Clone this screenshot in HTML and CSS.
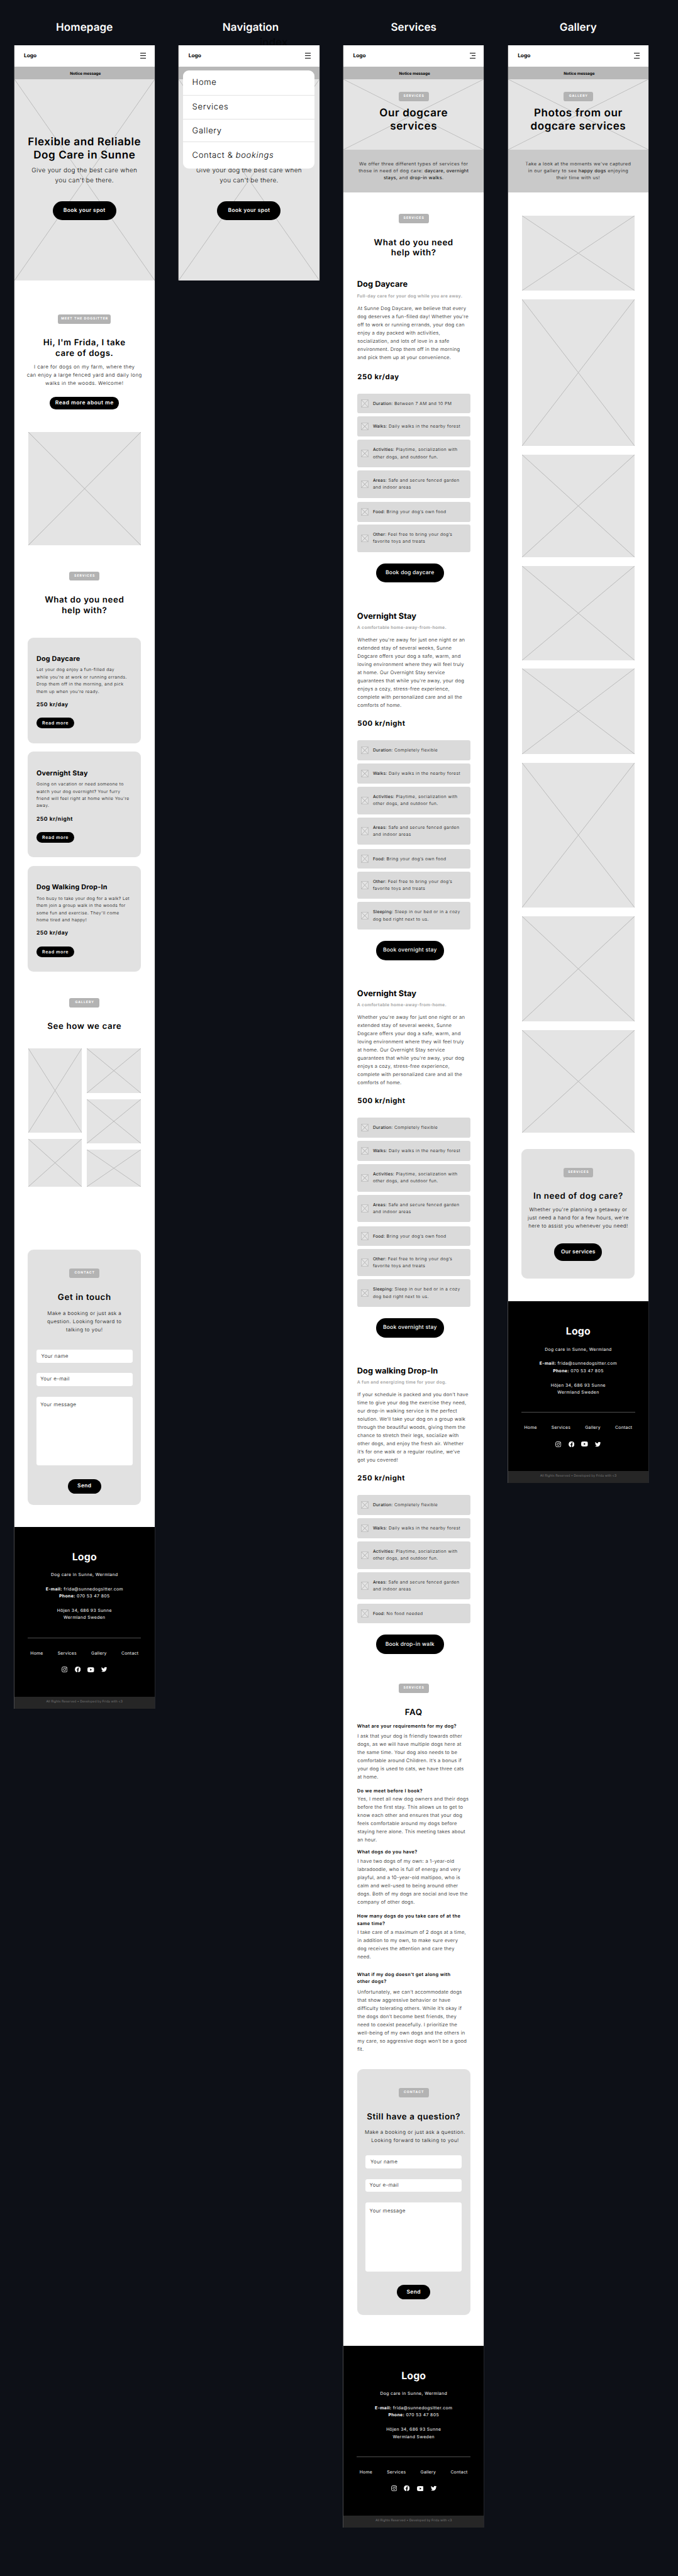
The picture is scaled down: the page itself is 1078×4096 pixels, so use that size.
FILE: index.html
```html
<!DOCTYPE html>
<html lang="en">
<head>
<meta charset="utf-8">
<title>Dog care wireframes</title>
<link rel="stylesheet" href="styles.css">
</head>
<body>
<svg class="defs" aria-hidden="true">
  <symbol id="i-menu" viewBox="0 0 16 16"><path d="M0 1h16M0 8h16M0 15h16" stroke="#000" stroke-width="1.8" shape-rendering="crispEdges"/></symbol>
  <symbol id="i-menu-short" viewBox="0 0 16 16"><path d="M0 1h16M5 8h11M0 15h16" stroke="#000" stroke-width="1.8" shape-rendering="crispEdges"/></symbol>
  <symbol id="i-ig" viewBox="0 0 16 16"><rect x=".8" y=".8" width="14.4" height="14.4" rx="4" fill="none" stroke="#fff" stroke-width="1.6"/><circle cx="8" cy="8" r="3.3" fill="none" stroke="#fff" stroke-width="1.5"/><circle cx="12.2" cy="3.8" r="1" fill="#fff"/></symbol>
  <symbol id="i-fb" viewBox="0 0 16 16"><path fill="#fff" d="M16 8a8 8 0 1 0-9.25 7.9v-5.6H4.7V8h2.05V6.25c0-2 1.2-3.15 3.05-3.15.88 0 1.8.16 1.8.16v2h-1c-1 0-1.32.62-1.32 1.26V8h2.25l-.36 2.3H9.28v5.6A8 8 0 0 0 16 8z"/></symbol>
  <symbol id="i-yt" viewBox="0 0 19 14"><path fill="#fff" fill-rule="evenodd" d="M3 .4Q9.500-.3 16 .4Q18.500.7 18.700 3Q19.200 7 18.700 11Q18.500 13.300 16 13.600Q9.500 14.300 3 13.600Q.5 13.300.3 11Q-.2 7 .3 3Q.5.7 3 .4zM7.600 4v6l5-3z"/></symbol>
  <symbol id="i-tw" viewBox="0 0 16 14"><path fill="#fff" d="M5 13.500c6 0 9.300-5 9.300-9.300v-.4A6.700 6.700 0 0 0 16 2.100a6.600 6.600 0 0 1-1.900.5A3.300 3.300 0 0 0 15.600.8a6.600 6.600 0 0 1-2.100.8 3.300 3.300 0 0 0-5.600 3A9.300 9.300 0 0 1 1.100 1.100a3.300 3.300 0 0 0 1 4.400 3.300 3.300 0 0 1-1.500-.4 3.300 3.300 0 0 0 2.600 3.200 3.300 3.300 0 0 1-1.500.1 3.300 3.300 0 0 0 3.100 2.300A6.600 6.600 0 0 1 0 12a9.300 9.300 0 0 0 5 1.500"/></symbol>
</svg>
<main class="board">

<section class="screen">
  <h2 class="label">Homepage</h2>
  <div class="phone">
    <header class="top"><span class="logo">Logo</span><svg class="menu-icon"><use href="#i-menu"/></svg></header>
    <div class="notice">Notice message</div>
    <div class="hero crossed">
      <h1>Flexible and Reliable<br>Dog Care in Sunne</h1>
      <p class="lead">Give your dog the best care when<br>you can't be there.</p>
      <a class="btn btn-spot">Book your spot</a>
    </div>
    <div class="body">
      <span class="badge badge-wide gap-meet">MEET THE DOGSITTER</span>
      <h3 class="heading">Hi, I'm Frida, I take<br>care of dogs.</h3>
      <p class="text intro">I care for dogs on my farm, where they<br>can enjoy a large fenced yard and daily long<br>walks in the woods. Welcome!</p>
      <a class="btn btn-about">Read more about me</a>
      <div class="photo crossed portrait"></div>
      <span class="badge gap-74">SERVICES</span>
      <h3 class="heading">What do you need<br>help with?</h3>
      <div class="cards">
        <article class="card"><h4>Dog Daycare</h4><p>Let your dog enjoy a fun-filled day<br>while you're at work or running errands.<br>Drop them off in the morning, and pick<br>them up when you're ready.</p><b class="price">250 kr/day</b><a class="btn btn-more">Read more</a></article>
        <article class="card"><h4>Overnight Stay</h4><p>Going on vacation or need someone to<br>watch your dog overnight? Your furry<br>friend will feel right at home while You're<br>away.</p><b class="price">250 kr/night</b><a class="btn btn-more">Read more</a></article>
        <article class="card"><h4>Dog Walking Drop-In</h4><p>Too busy to take your dog for a walk? Let<br>them join a group walk in the woods for<br>some fun and exercise. They'll come<br>home tired and happy!</p><b class="price">250 kr/day</b><a class="btn btn-more">Read more</a></article>
      </div>
      <span class="badge gap-74">GALLERY</span>
      <h3 class="heading">See how we care</h3>
      <div class="mosaic">
        <div class="mosaic-col"><div class="crossed m1"></div><div class="crossed m2"></div></div>
        <div class="mosaic-col"><div class="crossed m3"></div><div class="crossed m3"></div><div class="crossed m4"></div></div>
      </div>
      <form class="panel contact">
        <span class="badge">CONTACT</span>
        <h3 class="heading">Get in touch</h3>
        <p class="text">Make a booking or just ask a<br>question. Looking forward to<br>talking to you!</p>
        <div class="fields"><div class="field field-name">Your name</div><div class="field">Your e-mail</div><div class="field field-area">Your message</div></div>
        <a class="btn btn-send">Send</a>
      </form>
    </div>
    <footer class="footer">
      <div class="foot-logo">Logo</div>
      <p>Dog care in Sunne, Wermland</p>
      <p><b>E-mail:</b> frida@sunnedogsitter.com<br><b>Phone:</b> 070 53 47 805</p>
      <p>Höjen 34, 686 93 Sunne<br>Wermland Sweden</p>
      <hr>
      <nav class="foot-nav"><a>Home</a><a>Services</a><a>Gallery</a><a>Contact</a></nav>
      <div class="social"><svg><use href="#i-ig"/></svg><svg><use href="#i-fb"/></svg><svg class="yt"><use href="#i-yt"/></svg><svg><use href="#i-tw"/></svg></div>
    </footer>
    <div class="rights">All Rights Reserved • Developed by Frida with &lt;3</div>
  </div>
</section>

<section class="screen">
  <h2 class="label label-nav">Navigation</h2>
  <span class="ghost">index</span>
  <div class="phone">
    <header class="top"><span class="logo">Logo</span><svg class="menu-icon"><use href="#i-menu"/></svg></header>
    <div class="notice notice-empty"></div>
    <div class="hero hero-covered crossed">
      <p class="lead">Give your dog the best care when<br>you can't be there.</p>
      <a class="btn btn-spot">Book your spot</a>
    </div>
    <nav class="menu"><a>Home</a><a>Services</a><a>Gallery</a><a>Contact &amp; <i>bookings</i></a></nav>
  </div>
</section>

<section class="screen">
  <h2 class="label">Services</h2>
  <div class="phone">
    <header class="top"><span class="logo">Logo</span><svg class="menu-icon"><use href="#i-menu-short"/></svg></header>
    <div class="notice">Notice message</div>
    <div class="banner crossed"><span class="badge">SERVICES</span><h1>Our dogcare<br>services</h1></div>
    <p class="band">We offer three different types of services for<br>those in need of dog care: <b>daycare, overnight</b><br><b>stays,</b> and <b>drop-in walks</b>.</p>
    <div class="body">
      <span class="badge gap-61">SERVICES</span>
      <h3 class="heading">What do you need<br>help with?</h3>

      <article class="service first">
        <h4>Dog Daycare</h4>
        <p class="sub">Full-day care for your dog while you are away.</p>
        <p class="prose">At Sunne Dog Daycare, we believe that every<br>dog deserves a fun-filled day! Whether you're<br>off to work or running errands, your dog can<br>enjoy a day packed with activities,<br>socialization, and lots of love in a safe<br>environment. Drop them off in the morning<br>and pick them up at your convenience.</p>
        <b class="rate">250 kr/day</b>
        <ul class="facts">
          <li><i class="crossed"></i><p><b>Duration:</b> Between 7 AM and 10 PM</p></li>
          <li><i class="crossed"></i><p><b>Walks:</b> Daily walks in the nearby forest</p></li>
          <li class="two"><i class="crossed"></i><p><b>Activities:</b> Playtime, socialization with<br>other dogs, and outdoor fun.</p></li>
          <li class="two"><i class="crossed"></i><p><b>Areas:</b> Safe and secure fenced garden<br>and indoor areas</p></li>
          <li class="food"><i class="crossed"></i><p><b>Food:</b> Bring your dog’s own food</p></li>
          <li class="two"><i class="crossed"></i><p><b>Other:</b> Feel free to bring your dog’s<br>favorite toys and treats</p></li>
        </ul>
        <a class="btn btn-book">Book dog daycare</a>
      </article>

      <article class="service stay">
        <h4>Overnight Stay</h4>
        <p class="sub">A comfortable home-away-from-home.</p>
        <p class="prose">Whether you're away for just one night or an<br>extended stay of several weeks, Sunne<br>Dogcare offers your dog a safe, warm, and<br>loving environment where they will feel truly<br>at home. Our Overnight Stay service<br>guarantees that while you're away, your dog<br>enjoys a cozy, stress-free experience,<br>complete with personalized care and all the<br>comforts of home.</p>
        <b class="rate">500 kr/night</b>
        <ul class="facts">
          <li><i class="crossed"></i><p><b>Duration:</b> Completely flexible</p></li>
          <li><i class="crossed"></i><p><b>Walks:</b> Daily walks in the nearby forest</p></li>
          <li class="two"><i class="crossed"></i><p><b>Activities:</b> Playtime, socialization with<br>other dogs, and outdoor fun.</p></li>
          <li class="two"><i class="crossed"></i><p><b>Areas:</b> Safe and secure fenced garden<br>and indoor areas</p></li>
          <li class="food"><i class="crossed"></i><p><b>Food:</b> Bring your dog’s own food</p></li>
          <li class="two"><i class="crossed"></i><p><b>Other:</b> Feel free to bring your dog’s<br>favorite toys and treats</p></li>
          <li class="two"><i class="crossed"></i><p><b>Sleeping:</b> Sleep in our bed or in a cozy<br>dog bed right next to us.</p></li>
        </ul>
        <a class="btn btn-book">Book overnight stay</a>
      </article>

      <article class="service stay">
        <h4>Overnight Stay</h4>
        <p class="sub">A comfortable home-away-from-home.</p>
        <p class="prose">Whether you're away for just one night or an<br>extended stay of several weeks, Sunne<br>Dogcare offers your dog a safe, warm, and<br>loving environment where they will feel truly<br>at home. Our Overnight Stay service<br>guarantees that while you're away, your dog<br>enjoys a cozy, stress-free experience,<br>complete with personalized care and all the<br>comforts of home.</p>
        <b class="rate">500 kr/night</b>
        <ul class="facts">
          <li><i class="crossed"></i><p><b>Duration:</b> Completely flexible</p></li>
          <li><i class="crossed"></i><p><b>Walks:</b> Daily walks in the nearby forest</p></li>
          <li class="two"><i class="crossed"></i><p><b>Activities:</b> Playtime, socialization with<br>other dogs, and outdoor fun.</p></li>
          <li class="two"><i class="crossed"></i><p><b>Areas:</b> Safe and secure fenced garden<br>and indoor areas</p></li>
          <li class="food"><i class="crossed"></i><p><b>Food:</b> Bring your dog’s own food</p></li>
          <li class="two"><i class="crossed"></i><p><b>Other:</b> Feel free to bring your dog’s<br>favorite toys and treats</p></li>
          <li class="two"><i class="crossed"></i><p><b>Sleeping:</b> Sleep in our bed or in a cozy<br>dog bed right next to us.</p></li>
        </ul>
        <a class="btn btn-book">Book overnight stay</a>
      </article>

      <article class="service walk">
        <h4>Dog walking Drop-In</h4>
        <p class="sub">A fun and energizing time for your dog.</p>
        <p class="prose">If your schedule is packed and you don’t have<br>time to give your dog the exercise they need,<br>our drop-in walking service is the perfect<br>solution. We’ll take your dog on a group walk<br>through the beautiful woods, giving them the<br>chance to stretch their legs, socialize with<br>other dogs, and enjoy the fresh air. Whether<br>it’s for one walk or a regular routine, we’ve<br>got you covered!</p>
        <b class="rate">250 kr/night</b>
        <ul class="facts">
          <li><i class="crossed"></i><p><b>Duration:</b> Completely flexible</p></li>
          <li><i class="crossed"></i><p><b>Walks:</b> Daily walks in the nearby forest</p></li>
          <li class="two"><i class="crossed"></i><p><b>Activities:</b> Playtime, socialization with<br>other dogs, and outdoor fun.</p></li>
          <li class="two"><i class="crossed"></i><p><b>Areas:</b> Safe and secure fenced garden<br>and indoor areas</p></li>
          <li class="food"><i class="crossed"></i><p><b>Food:</b> No food needed</p></li>
        </ul>
        <a class="btn btn-book">Book drop-in walk</a>
      </article>

      <span class="badge">SERVICES</span>
      <h3 class="heading">FAQ</h3>
      <dl class="faq">
        <dt>What are your requirements for my dog?</dt>
        <dd>I ask that your dog is friendly towards other<br>dogs, as we will have multiple dogs here at<br>the same time. Your dog also needs to be<br>comfortable around Children. It’s a bonus if<br>your dog is used to cats, we have three cats<br>at home.</dd>
        <dt>Do we meet before I book?</dt>
        <dd class="tight">Yes, I meet all new dog owners and their dogs<br>before the first stay. This allows us to get to<br>know each other and ensures that your dog<br>feels comfortable around my dogs before<br>staying here alone. This meeting takes about<br>an hour.</dd>
        <dt class="near">What dogs do you have?</dt>
        <dd>I have two dogs of my own: a 1-year-old<br>labradoodle, who is full of energy and very<br>playful, and a 10-year-old maltipoo, who is<br>calm and well-used to being around other<br>dogs. Both of my dogs are social and love the<br>company of other dogs.</dd>
        <dt>How many dogs do you take care of at the<br>same time?</dt>
        <dd class="snug">I take care of a maximum of 2 dogs at a time,<br>in addition to my own, to make sure every<br>dog receives the attention and care they<br>need.</dd>
        <dt class="far">What if my dog doesn’t get along with<br>other dogs?</dt>
        <dd class="loose">Unfortunately, we can’t accommodate dogs<br>that show aggressive behavior or have<br>difficulty tolerating others. While it’s okay if<br>the dogs don’t become best friends, they<br>need to coexist peacefully. I prioritize the<br>well-being of my own dogs and the others in<br>my care, so aggressive dogs won’t be a good<br>fit.</dd>
      </dl>
      <form class="panel question">
        <span class="badge">CONTACT</span>
        <h3 class="heading">Still have a question?</h3>
        <p class="text">Make a booking or just ask a question.<br>Looking forward to talking to you!</p>
        <div class="fields"><div class="field field-name">Your name</div><div class="field">Your e-mail</div><div class="field field-area">Your message</div></div>
        <a class="btn btn-send">Send</a>
      </form>
    </div>
    <footer class="footer">
      <div class="foot-logo">Logo</div>
      <p>Dog care in Sunne, Wermland</p>
      <p><b>E-mail:</b> frida@sunnedogsitter.com<br><b>Phone:</b> 070 53 47 805</p>
      <p>Höjen 34, 686 93 Sunne<br>Wermland Sweden</p>
      <hr>
      <nav class="foot-nav"><a>Home</a><a>Services</a><a>Gallery</a><a>Contact</a></nav>
      <div class="social"><svg><use href="#i-ig"/></svg><svg><use href="#i-fb"/></svg><svg class="yt"><use href="#i-yt"/></svg><svg><use href="#i-tw"/></svg></div>
    </footer>
    <div class="rights">All Rights Reserved • Developed by Frida with &lt;3</div>
  </div>
</section>

<section class="screen">
  <h2 class="label">Gallery</h2>
  <div class="phone">
    <header class="top"><span class="logo">Logo</span><svg class="menu-icon"><use href="#i-menu-short"/></svg></header>
    <div class="notice">Notice message</div>
    <div class="banner crossed"><span class="badge">GALLERY</span><h1>Photos from our<br>dogcare services</h1></div>
    <p class="band">Take a look at the moments we've captured<br>in our gallery to see <b>happy dogs</b> enjoying<br>their time with us!</p>
    <div class="body">
      <div class="photos">
        <div class="crossed g1"></div><div class="crossed g2"></div><div class="crossed g3"></div><div class="crossed g4"></div>
        <div class="crossed g5"></div><div class="crossed g6"></div><div class="crossed g7"></div><div class="crossed g8"></div>
      </div>
      <section class="panel need">
        <span class="badge">SERVICES</span>
        <h3 class="heading">In need of dog care?</h3>
        <p class="text">Whether you're planning a getaway or<br>just need a hand for a few hours, we're<br>here to assist you whenever you need!</p>
        <a class="btn btn-services">Our services</a>
      </section>
    </div>
    <footer class="footer">
      <div class="foot-logo">Logo</div>
      <p>Dog care in Sunne, Wermland</p>
      <p><b>E-mail:</b> frida@sunnedogsitter.com<br><b>Phone:</b> 070 53 47 805</p>
      <p>Höjen 34, 686 93 Sunne<br>Wermland Sweden</p>
      <hr>
      <nav class="foot-nav"><a>Home</a><a>Services</a><a>Gallery</a><a>Contact</a></nav>
      <div class="social"><svg><use href="#i-ig"/></svg><svg><use href="#i-fb"/></svg><svg class="yt"><use href="#i-yt"/></svg><svg><use href="#i-tw"/></svg></div>
    </footer>
    <div class="rights">All Rights Reserved • Developed by Frida with &lt;3</div>
  </div>
</section>

</main>
</body>
</html>
```
FILE: styles.css
```css
/* 1rem is 100 design pixels */
html { font-size: 56.737px; }
* { box-sizing: border-box; margin: 0; padding: 0; }
body { background: #0d1017; font-family: Inter, "Liberation Sans", sans-serif; color: #000; text-rendering: geometricPrecision; }
.defs { display: none; }
h1, h2, h3, h4, p, a, span, b.price, b.rate, dt, dd, div { white-space: nowrap; }

.board { display: flex; align-items: flex-start; gap: .68rem; width: 1078px; height: 4096px; padding-left: .4rem; overflow: hidden; }
.screen { position: relative; flex: none; width: 3.933rem; padding-top: .59rem; }
.label { height: .4rem; margin-bottom: .28rem; text-align: center; color: #fff; font-size: .3rem; line-height: .4rem; font-weight: 600; letter-spacing: .0015rem; }
.label-nav { padding-left: .09rem; }
.ghost { position: absolute; left: 2.26rem; top: 1.02rem; color: #06080b; font-size: .3rem; line-height: .36rem; font-weight: 600; }
.phone { position: relative; width: 3.933rem; background: #fff; box-shadow: -.01rem 0 0 #777, .006rem 0 0 #555; }

.top { display: flex; justify-content: space-between; align-items: center; height: .59rem; padding: 0 .24rem 0 .27rem; }
.logo { padding-top: .04rem; font-size: .147rem; line-height: .2rem; font-weight: 700; }
.menu-icon { width: .16rem; height: .16rem; }
.notice { height: .36rem; padding-left: .05rem; background: #b8b8b8; text-align: center; font-size: .11rem; line-height: .39rem; font-weight: 700; }

.crossed {
  background:
    linear-gradient(to top right, transparent calc(50% - .8px), #bababa 50%, transparent calc(50% + .8px)),
    linear-gradient(to bottom right, transparent calc(50% - .8px), #bababa 50%, transparent calc(50% + .8px)),
    #e4e4e4;
}
.hero { display: flex; flex-direction: column; align-items: center; height: 5.65rem; padding-top: 1.581rem; text-align: center; }
.hero-covered { padding-top: 2.321rem; }
h1 { font-size: .3rem; line-height: .37rem; font-weight: 600; letter-spacing: .0103rem; }
.lead { margin-top: .119rem; font-size: .175rem; line-height: .28rem; font-weight: 300; letter-spacing: .0067rem; }

.btn { display: flex; align-items: center; justify-content: center; flex: none; background: #000; color: #fff; font-weight: 600; }
.btn-spot { margin-top: .413rem; width: 1.78rem; height: .54rem; border-radius: .27rem; font-size: .15rem; letter-spacing: .0065rem; }
.btn-about { margin-top: .266rem; width: 1.94rem; height: .34rem; border-radius: .17rem; font-size: .15rem; letter-spacing: .0082rem; }
.btn-more { width: 1.06rem; height: .3rem; margin-top: .248rem; border-radius: .15rem; font-size: .125rem; letter-spacing: .0105rem; }
.btn-send { width: .94rem; height: .406rem; margin-top: .379rem; border-radius: .203rem; font-size: .15rem; letter-spacing: .006rem; }
.btn-book { width: 1.9rem; height: .54rem; margin: .316rem 0 0 .53rem; border-radius: .27rem; font-size: .15rem; font-weight: 500; letter-spacing: .0045rem; }
.btn-services { width: 1.34rem; height: .5rem; margin-top: .375rem; border-radius: .25rem; font-size: .15rem; letter-spacing: .0033rem; }

.menu { position: absolute; left: .124rem; top: .7rem; width: 3.68rem; height: 2.75rem; border-radius: .16rem; background: #fff; font-size: .23rem; line-height: .28rem; font-weight: 300; letter-spacing: .0114rem; overflow: hidden; }
.menu a { display: block; padding-left: .25rem; border-bottom: 1px solid #e2e2e2; }
.menu a:nth-child(1) { height: .706rem; padding-top: .216rem; }
.menu a:nth-child(2) { height: .678rem; padding-top: .19rem; }
.menu a:nth-child(3) { height: .63rem; padding-top: .192rem; }
.menu a:nth-child(4) { padding-top: .242rem; border: 0; }

.body { display: flex; flex-direction: column; align-items: center; }
.badge { flex: none; width: .84rem; height: .26rem; padding-left: .018rem; border-radius: .055rem; background: #b3b3b3; color: #fff; text-align: center; font-size: .09rem; line-height: .27rem; font-weight: 700; letter-spacing: .018rem; }
.badge-wide { width: 1.48rem; }
.gap-meet { margin-top: .94rem; }
.gap-74 { margin-top: .738rem; }
.gap-61 { margin-top: .61rem; }
.heading { margin-top: .404rem; text-align: center; font-size: .235rem; line-height: .288rem; font-weight: 600; letter-spacing: .0104rem; }
.text { text-align: center; font-size: .14rem; line-height: .23rem; font-weight: 300; letter-spacing: .008rem; }
.intro { margin-top: .121rem; }
.portrait { width: 3.16rem; height: 3.163rem; margin-top: .65rem; }

.cards { display: flex; flex-direction: column; gap: .243rem; width: 3.17rem; margin: .609rem 0 0; }
.card { height: 2.96rem; padding: .484rem 0 0 .24rem; border-radius: .16rem; background: #e1e1e1; }
.card h4 { font-size: .19rem; line-height: .24rem; font-weight: 700; letter-spacing: .0038rem; }
.card p { margin-top: .085rem; font-size: .12rem; line-height: .2rem; font-weight: 300; letter-spacing: .0078rem; }
.price { display: block; margin-top: .193rem; font-size: .15rem; line-height: .2rem; letter-spacing: .0098rem; }

.mosaic { display: flex; gap: .14rem; width: 3.16rem; height: 3.873rem; margin-top: .467rem; }
.mosaic-col { display: flex; flex: 1; flex-direction: column; gap: .18rem; }
.m1 { height: 2.35rem; }
.m2 { height: 1.343rem; }
.m3 { height: 1.24rem; }
.m4 { height: 1.03rem; }

.panel { display: flex; flex-direction: column; align-items: center; width: 3.17rem; padding-top: .53rem; border-radius: .16rem; background: #e1e1e1; }
.contact { height: 7.15rem; margin: 1.767rem 0 .613rem; }
.contact .text { margin-top: .182rem; }
.contact .fields { margin-top: .443rem; }
.fields { display: flex; flex-direction: column; gap: .297rem; width: 2.7rem; }
.field { height: .364rem; padding-left: .115rem; border-radius: .06rem; background: #fff; font-size: .14rem; line-height: .35rem; font-weight: 300; letter-spacing: .0066rem; }
.field-name { padding-left: .14rem; line-height: .366rem; }
.field-area { height: 1.93rem; padding-top: .13rem; line-height: .2rem; }
.question { height: 6.893rem; margin: .44rem 0 .857rem; }
.question .text { margin-top: .17rem; padding-left: .08rem; letter-spacing: .0086rem; }
.question .fields { margin-top: .308rem; }
.need { height: 3.642rem; margin-bottom: .63rem; }
.need .text { margin-top: .1rem; letter-spacing: .0075rem; }

.banner { display: flex; flex-direction: column; align-items: center; height: 1.97rem; padding-top: .36rem; text-align: center; }
.banner h1 { margin-top: .163rem; }
.band { height: 1.2rem; padding-top: .328rem; background: #c9c9c9; text-align: center; font-size: .13rem; line-height: .19rem; font-weight: 300; letter-spacing: .0084rem; }
.band b { letter-spacing: .0052rem; }

.service { width: 3.17rem; }
.first { height: 9.297rem; margin-top: .61rem; }
.stay { height: 10.575rem; }
.walk { height: 8.893rem; }
.service h4 { font-size: .225rem; line-height: .28rem; font-weight: 700; letter-spacing: .0014rem; }
.sub { margin-top: .076rem; color: #aaa; font-size: .12rem; line-height: .18rem; font-weight: 700; letter-spacing: .0058rem; }
.prose { margin-top: .137rem; padding-left: .01rem; font-size: .135rem; line-height: .23rem; font-weight: 300; letter-spacing: .0052rem; }
.rate { display: block; margin-top: .28rem; padding-left: .01rem; font-size: .2rem; line-height: .24rem; letter-spacing: .0106rem; }
.first .rate { margin-top: .312rem; }
.facts { display: flex; flex-direction: column; gap: .09rem; margin-top: .342rem; list-style: none; }
.facts li { display: flex; align-items: center; height: .56rem; padding-left: .115rem; border-radius: .055rem; background: #dadada; }
.facts .two { height: .77rem; }
.facts .food { margin-top: .02rem; }
.facts .food + li { margin-top: -.015rem; }
.facts i { flex: none; width: .205rem; height: .22rem; border: 1px solid #c4c4c4; }
.facts p { align-self: flex-start; margin: .176rem 0 0 .123rem; font-size: .12rem; line-height: .2rem; font-weight: 300; letter-spacing: .0084rem; }
.facts b { letter-spacing: .0047rem; }

.faq { width: 3.17rem; }
.faq dt { margin-top: .17rem; font-size: .13rem; line-height: .2rem; font-weight: 600; letter-spacing: .0069rem; }
.faq dt:first-child { margin-top: .144rem; }
.faq dd { margin-top: .05rem; padding-left: .01rem; font-size: .135rem; line-height: .23rem; font-weight: 300; letter-spacing: .0052rem; }
.faq .tight { margin-top: .013rem; }
.faq .near { margin-top: .126rem; }
.faq .snug { margin-top: .033rem; }
.faq .far { margin-top: .28rem; }
.faq .loose { margin-top: .076rem; }

.photos { display: flex; flex-direction: column; gap: .24rem; width: 3.165rem; height: 26.158rem; margin-top: .65rem; }
.g1 { height: 2.103rem; }
.g2 { height: 4.117rem; }
.g3 { height: 2.88rem; }
.g4 { height: 2.64rem; }
.g5 { height: 2.4rem; }
.g6 { height: 4.06rem; }
.g7 { height: 2.95rem; }
.g8 { height: 2.88rem; }

.footer { display: flex; flex-direction: column; align-items: center; height: 4.76rem; padding-top: .668rem; background: #000; color: #fff; text-align: center; font-size: .12rem; line-height: .2rem; letter-spacing: .0072rem; }
.foot-logo { margin-bottom: .038rem; font-size: .28rem; line-height: .34rem; font-weight: 700; letter-spacing: .0028rem; }
.footer p { margin-top: .2rem; }
.footer hr { flex: none; width: 3.18rem; height: 1px; margin-top: .455rem; border: 0; background: #505050; }
.foot-nav { display: flex; justify-content: space-between; width: 3.03rem; margin-top: .325rem; letter-spacing: .005rem; }
.social { display: flex; gap: .197rem; align-items: center; margin-top: .28rem; }
.social svg { width: .165rem; height: .16rem; }
.social .yt { width: .19rem; height: .14rem; }
.rights { height: .34rem; background: #262626; color: #777; text-align: center; font-size: .09rem; line-height: .31rem; letter-spacing: .0012rem; }
```
